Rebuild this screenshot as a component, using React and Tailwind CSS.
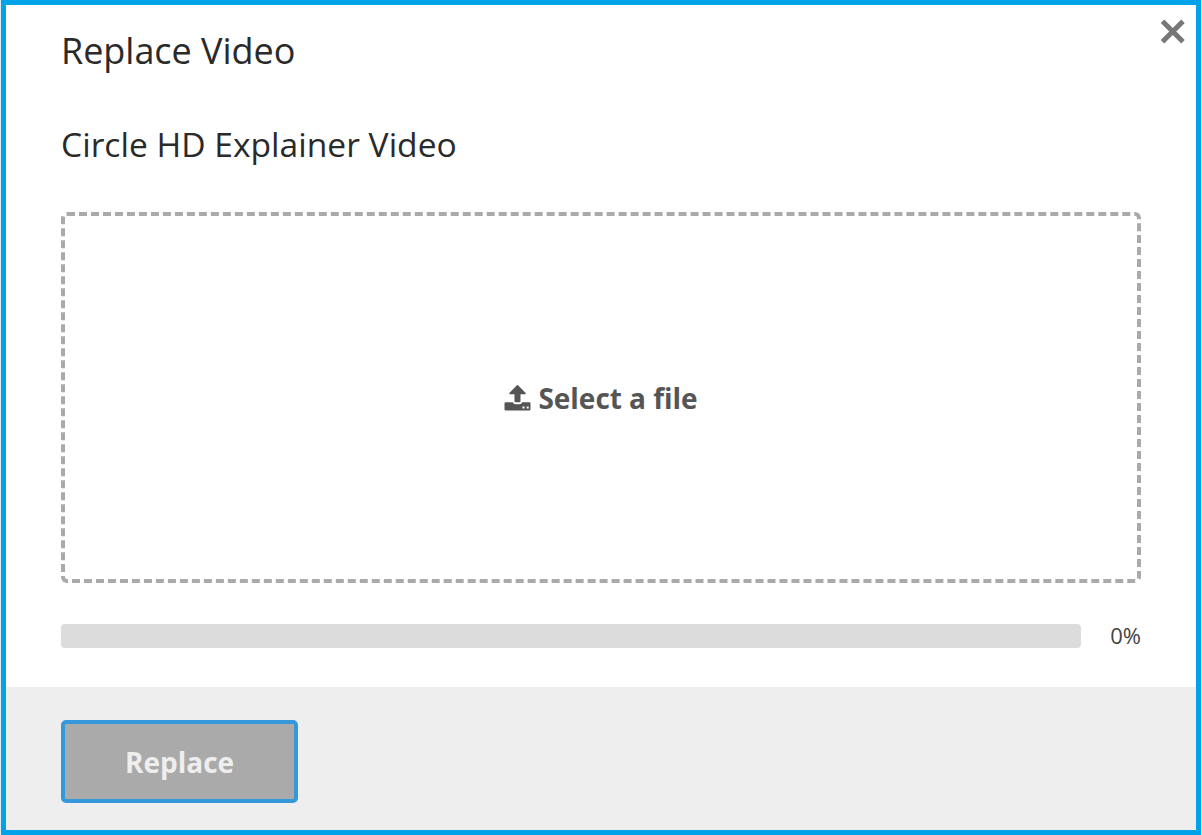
import React from "react";

export default function App() {
  return (
    <div className="h-[835px] w-[1202px] bg-[#dcecf5] px-px">
      <main className="flex h-[835px] w-[1200px] flex-col border-[5px] border-[#00a2e8] bg-white font-['Open_Sans',sans-serif] text-[#2a2a2a] antialiased">
        <header className="flex justify-between pl-[55px] pr-[10px]">
          <h1 className="mt-[21px] text-[36px] leading-[50px] tracking-[-0.04px]">Replace Video</h1>
          <button aria-label="Close" className="mt-[13px] h-[27px] w-[27px]">
            <svg viewBox="0 0 27 27" className="h-[27px] w-[27px]" stroke="#777" strokeWidth="5" strokeLinejoin="round"><path d="M3.500 3.200 24 23.700M24 3.200 3.500 23.700" /></svg>
          </button>
        </header>
        <section className="flex flex-col px-[55px]">
          <h2 className="mt-[43px] text-[33.6px] leading-[50px]">Circle HD Explainer Video</h2>
          <button className="mt-[43px] flex h-[371px] items-center justify-center gap-[7px] rounded-[6px] border-4 border-dashed border-[#aaa] pt-px text-[28px] tracking-[-0.04px] font-bold text-[#555]">
            <svg viewBox="0 0 27 27" className="h-[27px] w-[27px]" fill="currentColor">
              <path d="M12.900 .3Q13.500-.2 14.100 .3L21.600 8.100Q22 9.300 21 9.300H16.500V16.200Q16.500 17.200 15.500 17.200H11.500Q10.500 17.200 10.500 16.200V9.300H6Q5 9.300 5.400 8.100Z" />
              <path fillRule="evenodd" d="M1.800 17.200H8.900Q9.500 19.300 11.500 19.300H15.500Q17.500 19.300 18.100 17.200H25.200Q26.500 17.200 26.500 18.500V24.300Q26.500 25.600 25.200 25.600H1.800Q.5 25.600 .5 24.300V18.500Q.5 17.200 1.800 17.200ZM18.500 21.500V23.500H20.500V21.500ZM22.700 21.500V23.500H24.700V21.500Z" />
            </svg>
            Select a file
          </button>
          <div className="mt-[41px] flex h-6 items-start justify-between">
            <div className="h-6 w-[1020px] rounded-[4px] bg-[#dcdcdc]" />
            <span className="-mt-px text-[22px] leading-6 text-[#444]">0%</span>
          </div>
        </section>
        <footer className="mt-auto flex h-[143px] bg-[#eee] px-[55px] pt-[33px]">
          <button className="h-[83px] w-[237px] rounded-[5px] border-4 border-[#3498db] bg-[#aaa] text-[28px] font-bold text-[#eee]">Replace</button>
        </footer>
      </main>
    </div>
  );
}
